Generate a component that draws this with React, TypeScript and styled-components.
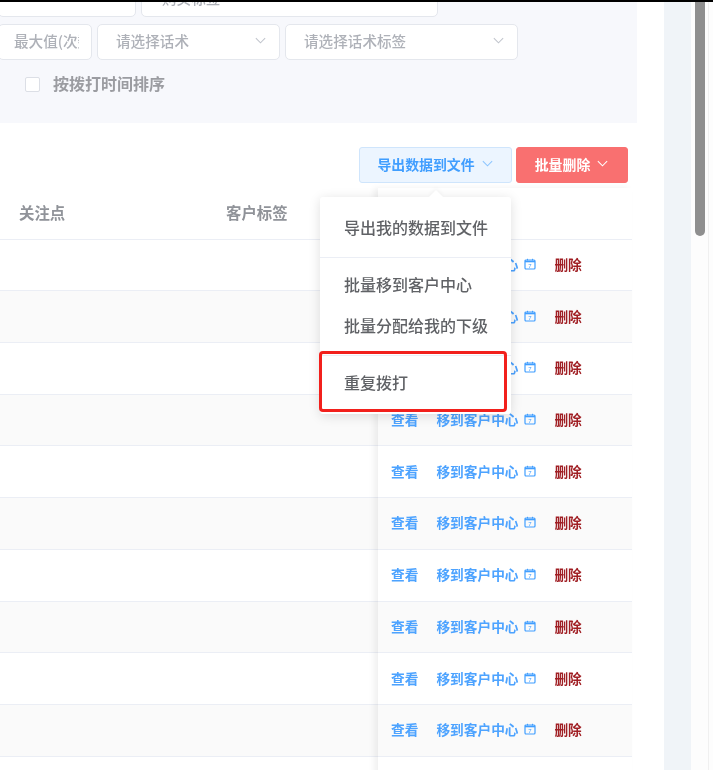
import React from "react";
import styled, { createGlobalStyle } from "styled-components";

const Global = createGlobalStyle`
  html, body { margin: 0; padding: 0; background: #fff; overflow: hidden; }
  body { font-family: "Noto Sans CJK SC", "Liberation Sans", sans-serif; }
`;

const Page = styled.div`
  width: 713px;
  height: 770px;
  overflow: hidden;
  display: flex;
  flex-direction: column;
  background: #fff;
  filter: blur(0.4px);
`;
const TopBar = styled.div`
  height: 2px;
  flex: none;
  background: #000;
  position: relative;
  z-index: 2;
`;
const Body = styled.div`
  flex: 1;
  display: flex;
  min-height: 0;
`;
const Main = styled.main`
  width: 637px;
  flex: none;
`;
const Gutter = styled.div`
  width: 27px;
  flex: none;
`;
const Strip = styled.div`
  width: 27px;
  flex: none;
  background: #f0f4f8;
`;
const Track = styled.div`
  flex: 1;
  display: flex;
  padding-left: 4px;
  background: #fdfdfd;
`;
const Thumb = styled.div`
  width: 10px;
  height: 234px;
  background: #8f8f8f;
  border-radius: 0 0 5px 5px;
`;
const TrackEdge = styled.div`
  width: 1px;
  margin-left: 3px;
  background: #f0f0f0;
`;

const Filter = styled.section`
  height: 121px;
  background: #f7f8fc;
  overflow: hidden;
`;
const FieldRow = styled.div<{ $first?: boolean }>`
  display: flex;
  gap: 5px;
  margin-top: ${(p) => (p.$first ? "-21px" : "7px")};
  margin-left: -2px;
`;
const Field = styled.div<{ $w: number; $pad?: number }>`
  box-sizing: border-box;
  width: ${(p) => p.$w}px;
  height: 36px;
  flex: none;
  display: flex;
  align-items: center;
  justify-content: space-between;
  padding: 0 12px 3px ${(p) => p.$pad ?? 18}px;
  background: #fff;
  border: 1px solid #e4e7ed;
  border-radius: 5px;
  color: #aeb1b8;
  font-size: 14.6px;
  font-weight: 500;
  white-space: nowrap;
  overflow: hidden;
`;
const ClipText = styled.span`
  overflow: hidden;
  flex: 1;
`;
const Check = styled.label`
  display: flex;
  align-items: center;
  gap: 13px;
  margin: 13px 0 0 25px;
  color: #9b9ca1;
  font-size: 16px;
  font-weight: 700;
  line-height: 20px;
`;
const Box = styled.span`
  box-sizing: border-box;
  width: 15px;
  height: 15px;
  margin-top: 3px;
  background: #fff;
  border: 1px solid #dcdfe6;
  border-radius: 2px;
`;

const Toolbar = styled.div`
  position: relative;
  height: 65px;
  box-sizing: border-box;
  padding: 24px 9px 0 0;
  display: flex;
  justify-content: flex-end;
  gap: 4px;
`;
const Action = styled.button<{ $danger?: boolean }>`
  box-sizing: border-box;
  height: 36px;
  width: ${(p) => (p.$danger ? 112 : 153)}px;
  display: flex;
  align-items: center;
  justify-content: center;
  gap: 6px;
  padding: 0 0 3px;
  font: 700 13.9px "Noto Sans CJK SC", sans-serif;
  border-radius: 3px;
  border: 1px solid ${(p) => (p.$danger ? "#f97070" : "#cfe5fc")};
  background: ${(p) => (p.$danger ? "#f97070" : "#ecf5ff")};
  color: ${(p) => (p.$danger ? "#fff" : "#409eff")};
`;
const Menu = styled.div`
  position: absolute;
  z-index: 3;
  top: 74px;
  left: 320px;
  box-sizing: border-box;
  width: 191px;
  height: 217px;
  padding-top: 10.5px;
  background: #fff;
  border-radius: 3px;
  box-shadow: 0 2px 12px rgba(0, 0, 0, 0.13);
  &::before {
    content: "";
    position: absolute;
    top: -5px;
    left: 111px;
    width: 10px;
    height: 10px;
    background: #fff;
    transform: rotate(45deg);
    box-shadow: -2px -2px 4px rgba(0, 0, 0, 0.03);
  }
`;
const MenuItem = styled.div<{ $divided?: boolean }>`
  position: relative;
  height: 41px;
  line-height: 39px;
  padding-left: 24px;
  color: #606266;
  font-size: 16px;
  font-weight: 500;
  white-space: nowrap;
  ${(p) =>
    p.$divided &&
    `margin-top: 16px;
     &::before { content: ""; display: block; position: absolute; top: -8px; left: 0; right: 0; height: 1px; background: #ebeef5; }`}
`;
const Highlight = styled.div`
  position: absolute;
  top: 154px;
  left: -1px;
  box-sizing: border-box;
  width: 188px;
  height: 61px;
  border: 3px solid #f2201c;
  border-radius: 4px;
`;

const Table = styled.div`
  position: relative;
  width: 632px;
  display: grid;
  grid-template-columns: 378px 254px;
`;
const Columns = styled.div`
  display: flex;
  flex-direction: column;
`;
const FixedColumn = styled(Columns)`
  position: relative;
  box-shadow: -4px 0 6px rgba(0, 0, 0, 0.06);
`;
const Row = styled.div<{ $alt?: boolean }>`
  box-sizing: border-box;
  height: 51.7px;
  flex: none;
  display: flex;
  align-items: center;
  padding-bottom: 2px;
  background: ${(p) => (p.$alt ? "#fafafa" : "#fff")};
  border-bottom: 1px solid #ebeef5;
`;
const Head = styled(Row)`
  color: #909399;
  font-size: 15.4px;
  font-weight: 700;
`;
const HeadA = styled.span`
  margin-left: 19px;
  width: 207px;
`;
const Actions = styled(Row)`
  padding-left: 13px;
  font-size: 13.7px;
  white-space: nowrap;
`;
const LinkText = styled.span`
  color: #4da3ff;
  font-weight: 700;
`;
const Move = styled(LinkText)`
  margin-left: 18px;
  width: 84px;
`;
const CalIcon = styled.svg`
  width: 12px;
  height: 12px;
  margin-left: 4px;
  flex: none;
`;
const Del = styled.span`
  margin-left: 18px;
  color: #a01f24;
  font-weight: 700;
`;
const Chevron = ({ color, size = 13 }: { color: string; size?: number }) => (
  <svg width={size} height={size} viewBox="0 0 14 14" fill="none" style={{ flex: "none" }}>
    <path d="M2 4.5 L7 9.5 L12 4.5" stroke={color} strokeWidth="1.1" />
  </svg>
);
const Calendar = () => (
  <CalIcon viewBox="0 0 12 12" fill="none">
    <rect x="1" y="2" width="10" height="9" rx="1" stroke="#409eff" strokeWidth="1.2" />
    <path d="M1 3.5H11" stroke="#409eff" strokeWidth="1.6" />
    <path d="M3.5 .8V2.5M8.5 .8V2.5" stroke="#409eff" />
    <text x="6" y="9.6" fontSize="6" textAnchor="middle" fill="#409eff" fontFamily="Liberation Sans">7</text>
  </CalIcon>
);

const rows = Array.from({ length: 11 }, (_, i) => i);

export default function App() {
  return (
    <Page>
      <Global />
      <TopBar />
      <Body>
        <Main>
          <Filter>
            <FieldRow $first>
              <Field $w={138}>
                <span />
                <Chevron color="#c0c4cc" />
              </Field>
              <Field $w={297} $pad={20}>
                <ClipText>购买标签</ClipText>
                <Chevron color="#c0c4cc" />
              </Field>
            </FieldRow>
            <FieldRow>
              <Field $w={94} $pad={15}>
                <ClipText>最大值(次数)</ClipText>
              </Field>
              <Field $w={183}>
                <ClipText>请选择话术</ClipText>
                <Chevron color="#c0c4cc" />
              </Field>
              <Field $w={233}>
                <ClipText>请选择话术标签</ClipText>
                <Chevron color="#c0c4cc" />
              </Field>
            </FieldRow>
            <Check>
              <Box />
              按拨打时间排序
            </Check>
          </Filter>
          <Toolbar>
            <Action>
              导出数据到文件
              <Chevron color="#8cc5ff" />
            </Action>
            <Action $danger>
              批量删除
              <Chevron color="#fff" />
            </Action>
            <Menu>
              <MenuItem>导出我的数据到文件</MenuItem>
              <MenuItem $divided>批量移到客户中心</MenuItem>
              <MenuItem>批量分配给我的下级</MenuItem>
              <MenuItem $divided>重复拨打</MenuItem>
              <Highlight />
            </Menu>
          </Toolbar>
          <Table>
            <Columns>
              <Head>
                <HeadA>关注点</HeadA>
                <span>客户标签</span>
              </Head>
              {rows.map((i) => (
                <Row key={i} $alt={i % 2 === 1} />
              ))}
            </Columns>
            <FixedColumn>
              <Head />
              {rows.map((i) => (
                <Actions key={i} $alt={i % 2 === 1}>
                  <LinkText>查看</LinkText>
                  <Move>移到客户中心</Move>
                  <Calendar />
                  <Del>删除</Del>
                </Actions>
              ))}
            </FixedColumn>
          </Table>
        </Main>
        <Gutter />
        <Strip />
        <Track>
          <Thumb />
          <TrackEdge />
        </Track>
      </Body>
    </Page>
  );
}
